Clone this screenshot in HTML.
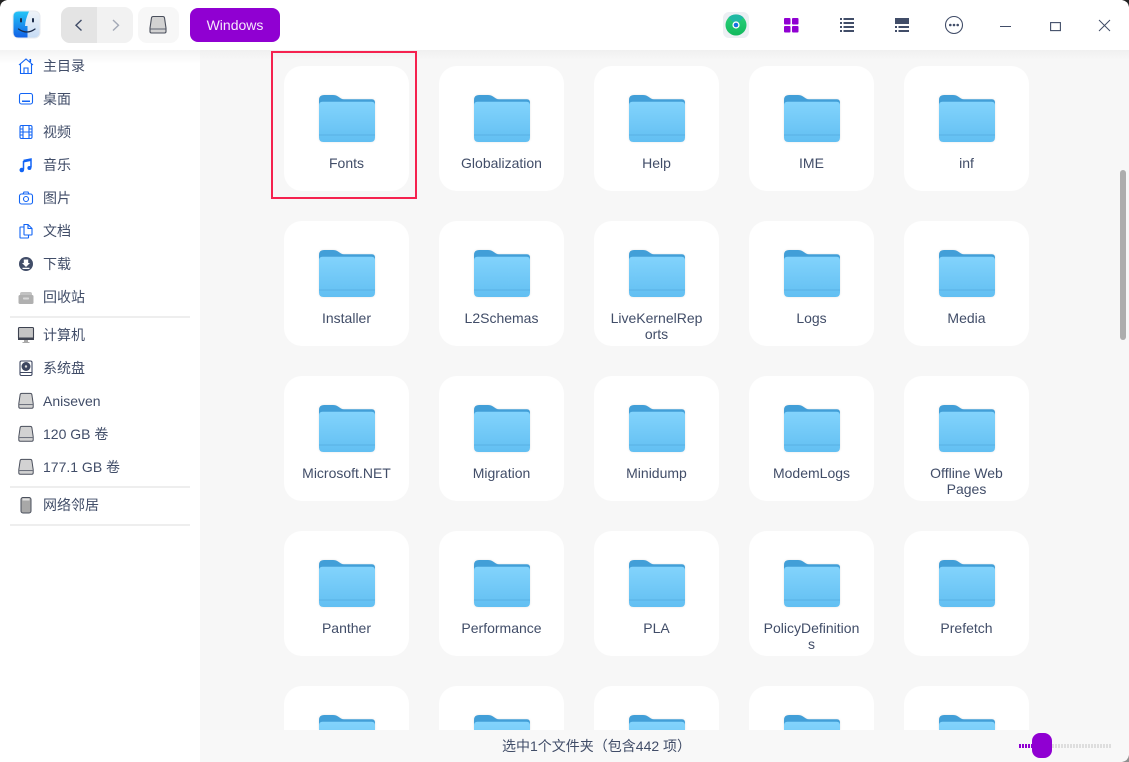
<!DOCTYPE html>
<html lang="zh"><head><meta charset="utf-8"><title>Windows</title>
<style>
*{box-sizing:border-box}
html,body{margin:0;padding:0;width:1129px;height:762px;overflow:hidden;background:#fff}
body{position:relative;font-family:"Liberation Sans","Noto Sans CJK SC",sans-serif;color:#414d68;font-size:14px}
.abs,.card,.si,.ic,.sep{position:absolute}
#main{left:200px;top:50px;width:929px;height:680px;background:linear-gradient(#f0f0f0,#f7f7f7 10px);overflow:hidden}
#top{left:0;top:0;width:1129px;height:50px;background:#fff;z-index:5}
#side{left:0;top:50px;width:200px;height:712px;background:#fff}
#shade{left:0;top:50px;width:200px;height:14px;background:linear-gradient(#f3f3f3,#fff);}
.card{width:125px;height:125px;background:#fff;border-radius:18px;text-align:center}
.card.last{height:44px;border-radius:18px 18px 0 0}
.card svg{position:absolute;left:34px;top:27px;filter:drop-shadow(0 0 1px rgba(0,0,0,.1))}
.card div{position:absolute;left:12px;width:101px;top:89px;line-height:16px;word-break:break-all;color:#414d68}
.si{left:43px;line-height:20px;white-space:nowrap;color:#414d68}
.ic{left:17px}
.sep{left:10px;width:180px;height:2px;background:#eeeeee}
#status{left:200px;top:730px;width:929px;height:32px;background:#f8f8f8;z-index:3}
#stxt{left:302px;top:7px;line-height:18px;white-space:nowrap;position:absolute}
</style></head><body>
<svg width="0" height="0" style="position:absolute"><defs>
<linearGradient id="fg" x1="0" y1="0" x2="0" y2="1"><stop offset="0" stop-color="#82d3fc"/><stop offset="1" stop-color="#62bff2"/></linearGradient>
<symbol id="f" viewBox="0 0 58 50">
<path d="M1 7Q1 2 6 2H15Q18 2 20 3.500L23 5.500Q24.500 6.300 26 6.300H54Q57 6.300 57 10V20H1Z" fill="#429fd8"/>
<path d="M1 12.500Q1 8.800 4.500 8.800H53.500Q57 8.800 57 12.500V44.500Q57 49 52.500 49H5.500Q1 49 1 44.500Z" fill="url(#fg)"/>
<rect x="1" y="41.500" width="56" height="1" fill="#58b0e3"/>
</symbol>
<symbol id="d" viewBox="0 0 20 20">
<path d="M3.500 2.800Q3.800 1.500 5.200 1.500H14.800Q16.200 1.500 16.500 2.800L18 13V16.500Q18 18 16.500 18H3.500Q2 18 2 16.500V13Z" fill="#d2d2d2" stroke="#4a4f5c" stroke-width="1.100"/>
<rect x="2.500" y="13.500" width="15" height="1" fill="#5c6270"/>
</symbol>
</defs></svg>

<div id="top" class="abs">
<svg class="abs" style="left:12px;top:10px" width="29" height="29" viewBox="0 0 29 29">
<defs><linearGradient id="fl" x1="0" y1="0" x2="0" y2="1"><stop offset="0" stop-color="#25c5f7"/><stop offset="1" stop-color="#1261e6"/></linearGradient>
<linearGradient id="fr" x1="0" y1="0" x2="0" y2="1"><stop offset="0" stop-color="#eef3f8"/><stop offset="1" stop-color="#c7dcf5"/></linearGradient></defs>
<rect x="0.500" y="0.500" width="28" height="28" rx="6" fill="#e7eaef"/>
<rect x="1.500" y="1.500" width="26" height="26" rx="5" fill="url(#fr)"/>
<path d="M6.500 1.500H17Q13.500 9 13 16H15.500V27.500H6.500Q1.500 27.500 1.500 22.500V6.500Q1.500 1.500 6.500 1.500Z" fill="url(#fl)"/>
<rect x="8" y="8" width="2" height="4.500" rx="1" fill="#1b2b4a"/><rect x="20" y="8" width="2" height="4.500" rx="1" fill="#1b2b4a"/>
<path d="M6.500 19Q15 25 23 19" fill="none" stroke="#1b2b4a" stroke-width="1.300" stroke-linecap="round"/>
</svg>
<div class="abs" style="left:61px;top:7px;width:72px;height:36px;border-radius:9px;background:#f2f2f2;overflow:hidden"><div style="width:36px;height:36px;background:#e4e4e4"></div></div>
<svg class="abs" style="left:61px;top:7px" width="72" height="36" viewBox="0 0 72 36"><path d="M20.500 13L15 18.200L20.500 23.500" fill="none" stroke="#414d68" stroke-width="1.400"/><path d="M52 13L57.500 18.200L52 23.500" fill="none" stroke="#a3a9b6" stroke-width="1.400"/></svg>
<div class="abs" style="left:138px;top:7px;width:41px;height:36px;border-radius:9px;background:#f7f7f7"></div>
<svg class="abs" style="left:148px;top:15px" width="20" height="20"><use href="#d" width="20" height="20"/></svg>
<div class="abs" style="left:190px;top:8px;width:90px;height:34px;border-radius:8px;background:#9000d2;color:#f6e8fc;text-align:center;line-height:34px">Windows</div>

<svg class="abs" style="left:722px;top:11px" width="28" height="28" viewBox="0 0 28 28">
<defs><linearGradient id="gr" x1="0" y1="0" x2="0" y2="1"><stop offset="0" stop-color="#2bd17d"/><stop offset="1" stop-color="#12b95c"/></linearGradient></defs>
<rect x="1" y="1" width="26" height="26" rx="6" fill="#eceff3"/><circle cx="14" cy="14" r="10.500" fill="url(#gr)"/>
<path d="M14 14L6.500 6.500A10.500 10.500 0 0 1 21.500 6.500Z" fill="#1fb8a4"/>
<circle cx="14" cy="14" r="3.600" fill="#fff"/><circle cx="14" cy="14" r="2.300" fill="#1572e0"/>
</svg>
<svg class="abs" style="left:784px;top:18px" width="15" height="15"><rect width="6.500" height="6.500" rx="1" fill="#9000d2"/><rect x="8" width="6.500" height="6.500" rx="1" fill="#9000d2"/><rect y="8" width="6.500" height="6.500" rx="1" fill="#9000d2"/><rect x="8" y="8" width="6.500" height="6.500" rx="1" fill="#9000d2"/></svg>
<svg class="abs" style="left:840px;top:18px" width="15" height="15" fill="#414d68"><rect y="0" width="2" height="2"/><rect x="3.500" y="0" width="10.500" height="2"/><rect y="4" width="2" height="2"/><rect x="3.500" y="4" width="10.500" height="2"/><rect y="8" width="2" height="2"/><rect x="3.500" y="8" width="10.500" height="2"/><rect y="12" width="2" height="2"/><rect x="3.500" y="12" width="10.500" height="2"/></svg>
<svg class="abs" style="left:895px;top:18px" width="15" height="15" fill="#414d68"><rect width="14" height="6"/><rect y="8" width="2" height="2"/><rect x="3.500" y="8" width="10.500" height="2"/><rect y="12" width="2" height="2"/><rect x="3.500" y="12" width="10.500" height="2"/></svg>
<svg class="abs" style="left:944px;top:15px" width="20" height="20" fill="#414d68"><circle cx="10" cy="10" r="8.500" fill="none" stroke="#414d68" stroke-width="1.100"/><circle cx="6.300" cy="10" r="1.300"/><circle cx="10" cy="10" r="1.300"/><circle cx="13.700" cy="10" r="1.300"/></svg>
<svg class="abs" style="left:1000px;top:20px" width="12" height="12"><rect y="6" width="11" height="1" fill="#414d68"/></svg>
<svg class="abs" style="left:1050px;top:22px" width="11" height="10"><rect x=".6" y=".6" width="9.800" height="8" fill="none" stroke="#414d68" stroke-width="1.100"/></svg>
<svg class="abs" style="left:1098px;top:19px" width="13" height="13"><path d="M1 1L12 12M12 1L1 12" stroke="#414d68" stroke-width="1"/></svg>
</div>

<div id="side" class="abs"></div>
<div id="shade" class="abs"></div>
<div style="position:absolute;left:0;top:0;width:200px;height:762px;z-index:1">
<svg class="ic" style="top:57px" width="18" height="18" viewBox="0 0 18 18" fill="none" stroke="#1264f5" stroke-width="1.100"><path d="M2 8L9 2L16 8"/><path d="M3.500 7V16.500H14.500V7"/><path d="M7 16.500V11H11V16.500"/><rect x="12.500" y="2" width="1.600" height="3" fill="#1264f5" stroke="none"/></svg>
<div class="si" style="top:56px">主目录</div>
<svg class="ic" style="top:90px" width="18" height="18" viewBox="0 0 18 18" fill="none" stroke="#1264f5" stroke-width="1.100"><rect x="2.500" y="3.500" width="13" height="10.500" rx="2"/><rect x="5" y="10.500" width="8" height="1.500" fill="#1264f5" stroke="none"/></svg>
<div class="si" style="top:89px">桌面</div>
<svg class="ic" style="top:123px" width="18" height="18" viewBox="0 0 18 18" fill="none" stroke="#1264f5" stroke-width="1.100"><rect x="3" y="2.500" width="12" height="13" rx="1.500"/><path d="M6 2.500V15.500M12 2.500V15.500M6 9H12M3 6H6M3 9H6M3 12H6M12 6H15M12 9H15M12 12H15"/></svg>
<div class="si" style="top:122px">视频</div>
<svg class="ic" style="top:156px" width="18" height="18" viewBox="0 0 18 18"><path d="M6.500 5V13.500M6.500 4.500L14 3V11.500" fill="none" stroke="#1264f5" stroke-width="1.500"/><path d="M6.500 4L14 2.500V5L6.500 6.500Z" fill="#1264f5"/><circle cx="4.800" cy="14" r="2.300" fill="#1264f5"/><circle cx="12.400" cy="12" r="2" fill="#1264f5"/></svg>
<div class="si" style="top:155px">音乐</div>
<svg class="ic" style="top:189px" width="18" height="18" viewBox="0 0 18 18" fill="none" stroke="#1264f5" stroke-width="1.100"><rect x="2.500" y="5" width="13" height="10" rx="2"/><path d="M6 5L7 3H11L12 5"/><circle cx="9" cy="10" r="2.500"/></svg>
<div class="si" style="top:188px">图片</div>
<svg class="ic" style="top:222px" width="18" height="18" viewBox="0 0 18 18" fill="none" stroke="#1264f5" stroke-width="1.100"><path d="M7 5H3.500Q3 5 3 5.500V15.500Q3 16 3.500 16H11Q11.500 16 11.500 15.500V13"/><path d="M7 2.500H11L15 6.500V12.500Q15 13 14.500 13H7.500Q7 13 7 12.500Z"/><path d="M11 2.500V6.500H15"/></svg>
<div class="si" style="top:221px">文档</div>
<svg class="ic" style="top:255px" width="18" height="18" viewBox="0 0 18 18"><circle cx="9" cy="9" r="7" fill="#414d68"/><path d="M6.800 4.500H11.200V8H13L9 12L5 8H6.800Z M5.500 12.800H12.500V14H5.500Z" fill="#fff"/></svg>
<div class="si" style="top:254px">下载</div>
<svg class="ic" style="top:288px" width="18" height="18" viewBox="0 0 18 18"><path d="M3 6Q3 4 5 4H13Q15 4 15 6V8H3Z" fill="#c2c2c2"/><rect x="1.500" y="7" width="15" height="9" rx="1.500" fill="#b0b0b0"/><rect x="6" y="9.500" width="6" height="2" rx=".7" fill="#d8d8d8"/></svg>
<div class="si" style="top:287px">回收站</div>
<div class="sep" style="top:316px"></div>
<svg class="ic" style="top:326px" width="18" height="18" viewBox="0 0 18 18"><rect x="1.500" y="1.500" width="15" height="11.500" rx="1" fill="#c4c4c4" stroke="#3d4250" stroke-width="1.100"/><rect x="1" y="11.500" width="16" height="2.500" fill="#3d4250"/><rect x="7" y="14" width="4" height="2" fill="#a9a9a9"/><rect x="5.500" y="16" width="7" height="1" fill="#a9a9a9"/></svg>
<div class="si" style="top:325px">计算机</div>
<svg class="ic" style="top:359px" width="18" height="18" viewBox="0 0 18 18"><rect x="3" y="2" width="12" height="14.500" rx="1.500" fill="#fff" stroke="#3d4660" stroke-width="1.100"/><circle cx="9" cy="7.500" r="4.500" fill="#3d4660"/><circle cx="9" cy="7.500" r="1.200" fill="#ddd"/><rect x="3" y="13" width="12" height="1" fill="#3d4660"/></svg>
<div class="si" style="top:358px">系统盘</div>
<svg class="ic" style="top:392px" width="18" height="18"><use href="#d" width="18" height="18"/></svg>
<div class="si" style="top:391px">Aniseven</div>
<svg class="ic" style="top:425px" width="18" height="18"><use href="#d" width="18" height="18"/></svg>
<div class="si" style="top:424px">120 GB 卷</div>
<svg class="ic" style="top:458px" width="18" height="18"><use href="#d" width="18" height="18"/></svg>
<div class="si" style="top:457px">177.1 GB 卷</div>
<div class="sep" style="top:486px"></div>
<svg class="ic" style="top:496px" width="18" height="18" viewBox="0 0 18 18"><rect x="4" y="1.500" width="10" height="15.500" rx="2" fill="#a8a8a8" stroke="#4a4f5c" stroke-width="1"/><rect x="5.500" y="2.500" width="7" height="2" fill="#e2e2e2"/></svg>
<div class="si" style="top:495px">网络邻居</div>
<div class="sep" style="top:524px"></div>
</div>

<div id="main" class="abs">
<div class="card" style="left:84px;top:16px"><svg width="58" height="50"><use href="#f"/></svg><div>Fonts</div></div>
<div class="card" style="left:239px;top:16px"><svg width="58" height="50"><use href="#f"/></svg><div>Globalization</div></div>
<div class="card" style="left:394px;top:16px"><svg width="58" height="50"><use href="#f"/></svg><div>Help</div></div>
<div class="card" style="left:549px;top:16px"><svg width="58" height="50"><use href="#f"/></svg><div>IME</div></div>
<div class="card" style="left:704px;top:16px"><svg width="58" height="50"><use href="#f"/></svg><div>inf</div></div>
<div class="card" style="left:84px;top:171px"><svg width="58" height="50"><use href="#f"/></svg><div>Installer</div></div>
<div class="card" style="left:239px;top:171px"><svg width="58" height="50"><use href="#f"/></svg><div>L2Schemas</div></div>
<div class="card" style="left:394px;top:171px"><svg width="58" height="50"><use href="#f"/></svg><div>LiveKernelRep<br>orts</div></div>
<div class="card" style="left:549px;top:171px"><svg width="58" height="50"><use href="#f"/></svg><div>Logs</div></div>
<div class="card" style="left:704px;top:171px"><svg width="58" height="50"><use href="#f"/></svg><div>Media</div></div>
<div class="card" style="left:84px;top:326px"><svg width="58" height="50"><use href="#f"/></svg><div>Microsoft.NET</div></div>
<div class="card" style="left:239px;top:326px"><svg width="58" height="50"><use href="#f"/></svg><div>Migration</div></div>
<div class="card" style="left:394px;top:326px"><svg width="58" height="50"><use href="#f"/></svg><div>Minidump</div></div>
<div class="card" style="left:549px;top:326px"><svg width="58" height="50"><use href="#f"/></svg><div>ModemLogs</div></div>
<div class="card" style="left:704px;top:326px"><svg width="58" height="50"><use href="#f"/></svg><div>Offline Web<br>Pages</div></div>
<div class="card" style="left:84px;top:481px"><svg width="58" height="50"><use href="#f"/></svg><div>Panther</div></div>
<div class="card" style="left:239px;top:481px"><svg width="58" height="50"><use href="#f"/></svg><div>Performance</div></div>
<div class="card" style="left:394px;top:481px"><svg width="58" height="50"><use href="#f"/></svg><div>PLA</div></div>
<div class="card" style="left:549px;top:481px"><svg width="58" height="50"><use href="#f"/></svg><div>PolicyDefinition<br>s</div></div>
<div class="card" style="left:704px;top:481px"><svg width="58" height="50"><use href="#f"/></svg><div>Prefetch</div></div>
<div class="card last" style="left:84px;top:636px"><svg width="58" height="17"><use href="#f" width="58" height="50"/></svg></div>
<div class="card last" style="left:239px;top:636px"><svg width="58" height="17"><use href="#f" width="58" height="50"/></svg></div>
<div class="card last" style="left:394px;top:636px"><svg width="58" height="17"><use href="#f" width="58" height="50"/></svg></div>
<div class="card last" style="left:549px;top:636px"><svg width="58" height="17"><use href="#f" width="58" height="50"/></svg></div>
<div class="card last" style="left:704px;top:636px"><svg width="58" height="17"><use href="#f" width="58" height="50"/></svg></div>
<div class="abs" style="left:920px;top:120px;width:6px;height:170px;border-radius:3px;background:#adadad"></div>
</div>

<div class="abs" style="left:271px;top:51px;width:146px;height:148px;border:2px solid #f5224f;z-index:4"></div>

<div id="status" class="abs">
<div id="stxt">选中1个文件夹（包含442 项）</div>
<svg class="abs" style="left:819px;top:14px" width="92" height="4">
<path d="M0 2H14" stroke="#9000d2" stroke-width="4" stroke-dasharray="2 1"/>
<path d="M33 2H92" stroke="#dedede" stroke-width="4" stroke-dasharray="2 1"/>
</svg>
<div class="abs" style="left:832px;top:3px;width:20px;height:25px;border-radius:8px;background:#9000d2"></div>
</div>

<svg class="abs" style="left:0;top:0;z-index:9" width="8" height="8"><path d="M0 0H7Q1 1 0 7Z" fill="#222"/></svg>
<svg class="abs" style="left:1121px;top:0;z-index:9" width="8" height="8"><path d="M8 0H1Q7 1 8 7Z" fill="#222"/></svg>
<svg class="abs" style="left:1121px;top:754px;z-index:9" width="8" height="8"><path d="M8 8H1Q7 7 8 1Z" fill="#8f8f8f"/></svg>
</body></html>
